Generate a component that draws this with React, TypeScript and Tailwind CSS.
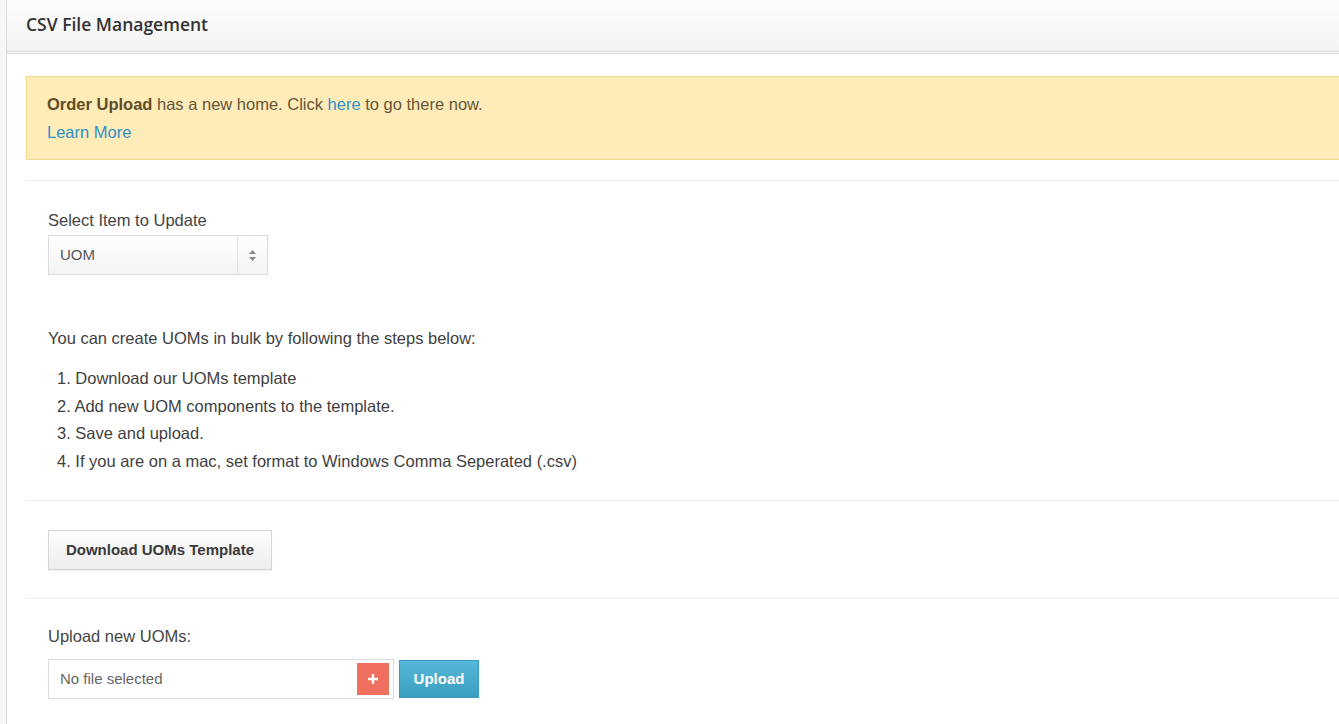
export default function App() {
    return (
        <div className="min-h-screen w-full overflow-hidden bg-[#f7f7f7] pl-[6px]">
            <div className="min-h-screen border-l border-[#dcdcdc] bg-white font-['Liberation_Sans',Arial,sans-serif] text-[16.5px] text-[#3f3f3f]">
                {/* header */}
                <div className="flex h-[54px] items-center border-b-[3px] border-double border-[#d9d9d9] bg-gradient-to-b from-[#fdfdfd] to-[#f3f3f3] pb-[2px] pl-[19px]">
                    <h1 className="font-['Open_Sans',sans-serif] text-[17.5px] font-semibold text-[#333]">
                        CSV File Management
                    </h1>
                </div>

                <div className="pl-[19px] pt-[22px]">
                    {/* notice */}
                    <div className="border border-r-0 border-[#f5d68e] bg-[#ffecb9] py-[13px] pl-[20px] leading-[28px] text-[#65563a]">
                        <div>
                            <span className="font-bold text-[#5e4d27]">Order Upload</span> has a new home. Click{" "}
                            <a href="#" className="text-[#2f8fca]">here</a> to go there now.
                        </div>
                        <a href="#" className="text-[#2f8fca]">Learn More</a>
                    </div>

                    <div className="mt-[20px] h-px bg-[#ececec]" />

                    <div className="pl-[22px] pt-[28px]">
                        <div className="leading-[22px] text-[#444]">Select Item to Update</div>
                        <div className="mt-[4px] flex h-[40px] w-[220px] border border-[#dcdcdc] bg-gradient-to-b from-white to-[#f4f4f4]">
                            <div className="flex flex-1 items-center pl-[11px] text-[15px] text-[#555]">UOM</div>
                            <div className="flex w-[30px] flex-col items-center justify-center gap-[3px] border-l border-[#e2e2e2]">
                                <svg width="7" height="4" viewBox="0 0 7 4"><path d="M3.5 0L7 4H0z" fill="#8a8a8a" /></svg>
                                <svg width="7" height="4" viewBox="0 0 7 4"><path d="M0 0h7L3.5 4z" fill="#8a8a8a" /></svg>
                            </div>
                        </div>

                        <p className="mt-[52px] leading-[22px]">You can create UOMs in bulk by following the steps below:</p>
                        <ol className="mt-[16px] pl-[9px] leading-[27.5px]">
                            <li>1. Download our UOMs template</li>
                            <li>2. Add new UOM components to the template.</li>
                            <li>3. Save and upload.</li>
                            <li>4. If you are on a mac, set format to Windows Comma Seperated (.csv)</li>
                        </ol>
                    </div>

                    <div className="mt-[25px] h-px bg-[#ececec]" />

                    <div className="pl-[22px] pt-[29px]">
                        <button className="h-[40px] w-[224px] border border-[#d6d6d6] bg-gradient-to-b from-[#fdfdfd] to-[#ededed] text-[15px] font-bold text-[#3a3a3a] shadow-[0_1px_1px_rgba(0,0,0,0.06)]">
                            Download UOMs Template
                        </button>
                    </div>

                    <div className="mt-[28px] h-px bg-[#ececec]" />

                    <div className="pl-[22px] pt-[26px]">
                        <div className="leading-[22px] text-[#444]">Upload new UOMs:</div>
                        <div className="mt-[12px] flex items-center gap-[5px]">
                            <div className="flex h-[40px] w-[346px] items-center justify-between border border-[#dcdcdc] bg-white pl-[11px] pr-[4px]">
                                <span className="text-[15px] text-[#666]">No file selected</span>
                                <span className="flex h-[32px] w-[32px] items-center justify-center bg-[#ef705e]">
                                    <svg width="10" height="10" viewBox="0 0 10 10"><path d="M5 0v10M0 5h10" stroke="#fff" strokeWidth="2.4" /></svg>
                                </span>
                            </div>
                            <button className="h-[38px] w-[80px] border border-[#3a9cc0] bg-gradient-to-b from-[#56b8d8] to-[#3a9ebf] text-[15px] font-bold text-white">
                                Upload
                            </button>
                        </div>
                    </div>
                </div>
            </div>
        </div>
    );
}
